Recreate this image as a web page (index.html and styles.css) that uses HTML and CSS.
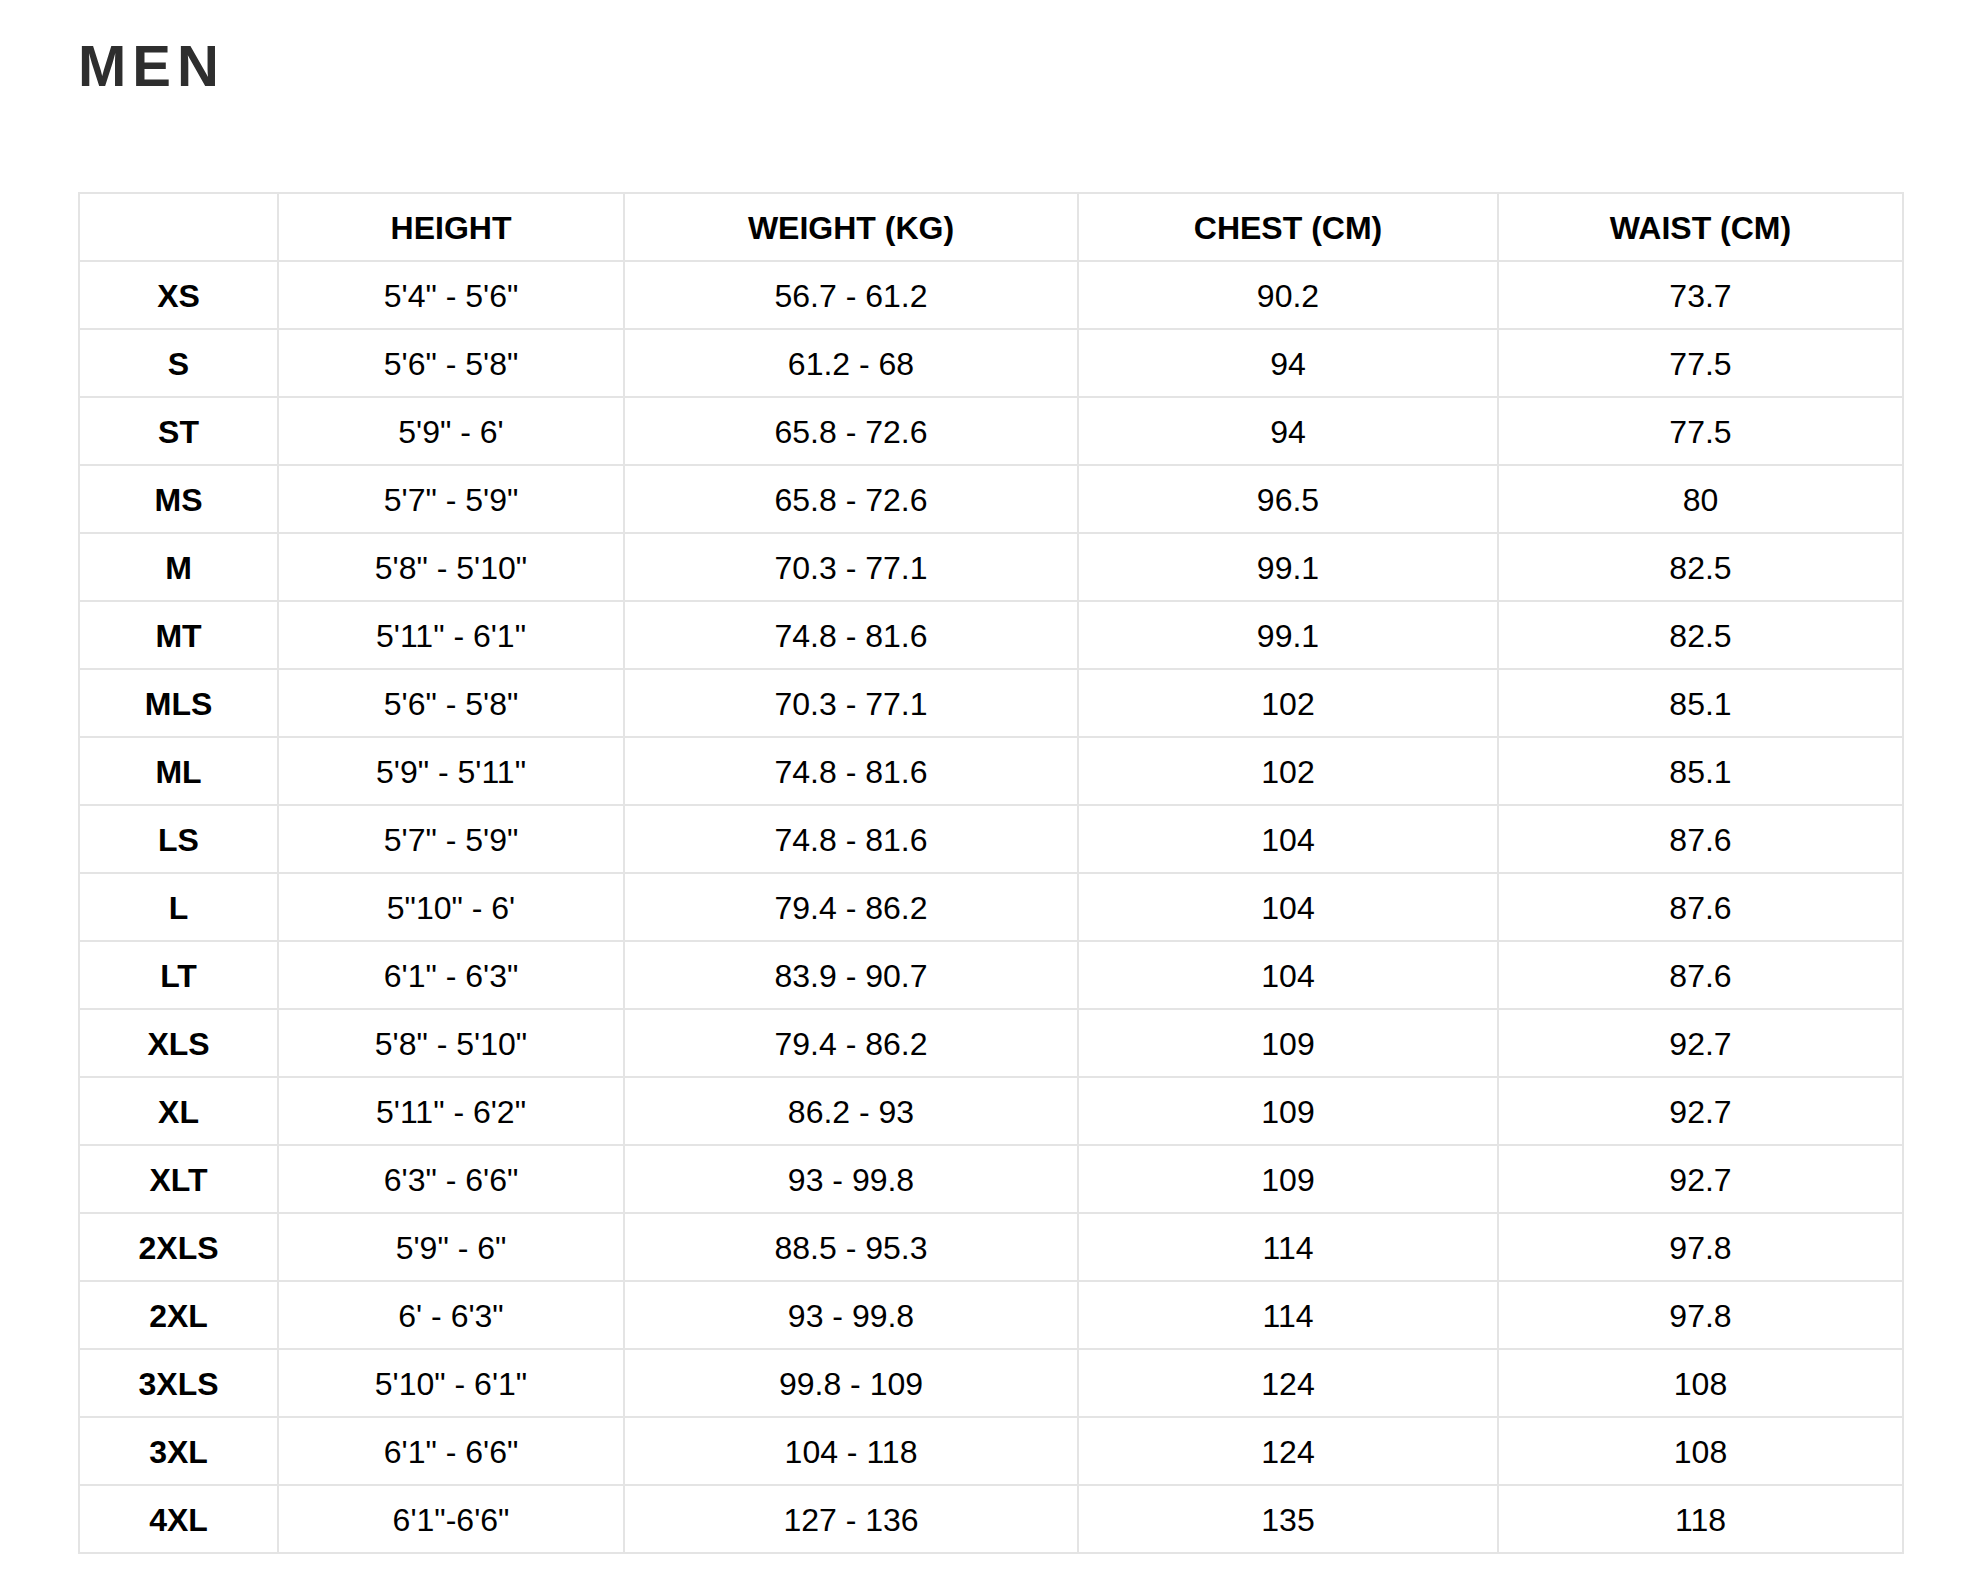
FILE: index.html
```html
<!DOCTYPE html>
<html lang="en">
<head>
<meta charset="utf-8">
<title>Men size chart</title>
<link rel="stylesheet" href="styles.css">
</head>
<body>
<main class="page">
  <h1 class="title">MEN</h1>
  <table class="chart">
    <colgroup>
      <col class="c-size">
      <col class="c-height">
      <col class="c-weight">
      <col class="c-chest">
      <col class="c-waist">
    </colgroup>
    <thead>
      <tr><th></th><th>HEIGHT</th><th>WEIGHT (KG)</th><th>CHEST (CM)</th><th>WAIST (CM)</th></tr>
    </thead>
    <tbody>
      <tr><th>XS</th><td>5'4" - 5'6"</td><td>56.7 - 61.2</td><td>90.2</td><td>73.7</td></tr>
      <tr><th>S</th><td>5'6" - 5'8"</td><td>61.2 - 68</td><td>94</td><td>77.5</td></tr>
      <tr><th>ST</th><td>5'9" - 6'</td><td>65.8 - 72.6</td><td>94</td><td>77.5</td></tr>
      <tr><th>MS</th><td>5'7" - 5'9"</td><td>65.8 - 72.6</td><td>96.5</td><td>80</td></tr>
      <tr><th>M</th><td>5'8" - 5'10"</td><td>70.3 - 77.1</td><td>99.1</td><td>82.5</td></tr>
      <tr><th>MT</th><td>5'11" - 6'1"</td><td>74.8 - 81.6</td><td>99.1</td><td>82.5</td></tr>
      <tr><th>MLS</th><td>5'6" - 5'8"</td><td>70.3 - 77.1</td><td>102</td><td>85.1</td></tr>
      <tr><th>ML</th><td>5'9" - 5'11"</td><td>74.8 - 81.6</td><td>102</td><td>85.1</td></tr>
      <tr><th>LS</th><td>5'7" - 5'9"</td><td>74.8 - 81.6</td><td>104</td><td>87.6</td></tr>
      <tr><th>L</th><td>5"10" - 6'</td><td>79.4 - 86.2</td><td>104</td><td>87.6</td></tr>
      <tr><th>LT</th><td>6'1" - 6'3"</td><td>83.9 - 90.7</td><td>104</td><td>87.6</td></tr>
      <tr><th>XLS</th><td>5'8" - 5'10"</td><td>79.4 - 86.2</td><td>109</td><td>92.7</td></tr>
      <tr><th>XL</th><td>5'11" - 6'2"</td><td>86.2 - 93</td><td>109</td><td>92.7</td></tr>
      <tr><th>XLT</th><td>6'3" - 6'6"</td><td>93 - 99.8</td><td>109</td><td>92.7</td></tr>
      <tr><th>2XLS</th><td>5'9" - 6"</td><td>88.5 - 95.3</td><td>114</td><td>97.8</td></tr>
      <tr><th>2XL</th><td>6' - 6'3"</td><td>93 - 99.8</td><td>114</td><td>97.8</td></tr>
      <tr><th>3XLS</th><td>5'10" - 6'1"</td><td>99.8 - 109</td><td>124</td><td>108</td></tr>
      <tr><th>3XL</th><td>6'1" - 6'6"</td><td>104 - 118</td><td>124</td><td>108</td></tr>
      <tr><th>4XL</th><td>6'1"-6'6"</td><td>127 - 136</td><td>135</td><td>118</td></tr>
    </tbody>
  </table>
</main>
</body>
</html>
```
FILE: styles.css
```css
html, body {
  margin: 0;
  padding: 0;
  background: #ffffff;
}

body {
  font-family: "Liberation Sans", Arial, sans-serif;
  color: #000000;
}

.page {
  padding: 37px 0 0 78px;
}

.title {
  margin: 0;
  font-size: 58px;
  line-height: 58px;
  font-weight: 700;
  letter-spacing: 6px;
  color: #2e2e2e;
}

.chart {
  margin-top: 97px;
  width: 1824px;
  table-layout: fixed;
  border-collapse: collapse;
  font-size: 32px;
}

.c-size { width: 199px; }
.c-height { width: 346px; }
.c-weight { width: 454px; }
.c-chest { width: 420px; }
.c-waist { width: 405px; }

.chart th,
.chart td {
  border: 2px solid #e4e4e4;
  height: 64px;
  padding: 2px 0 0;
  text-align: center;
  vertical-align: middle;
  line-height: 1;
}

.chart th {
  font-weight: 700;
}

.chart td {
  font-weight: 400;
}
```
